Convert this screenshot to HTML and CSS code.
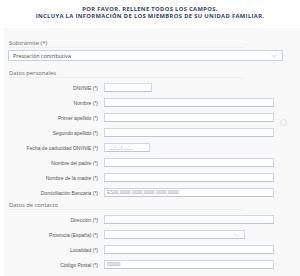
FILE: index.html
```html
<!DOCTYPE html>
<html lang="es">
<head>
    <meta charset="UTF-8">
    <meta name="viewport" content="width=device-width, initial-scale=1.0">
    <title>Solicitud</title>
    <link rel="stylesheet" href="styles.css">
</head>
<body>

    <div class="intro">
        <p>POR FAVOR, RELLENE TODOS LOS CAMPOS.</p>
        <p>INCLUYA LA INFORMACIÓN DE LOS MIEMBROS DE SU UNIDAD FAMILIAR.</p>
    </div>

    <div class="panel">
        <div class="section-title sub">Subtrámite (*)</div>
        <div class="select wide">
            <span>Prestación contributiva</span>
            <svg class="chev" width="6" height="4" viewBox="0 0 6 4"><path d="M0.5 0.8 3 3.2 5.5 0.8" fill="none" stroke="#c9ced6" stroke-width="0.7"/></svg>
        </div>

        <div class="section-title">Datos personales</div>
        <div class="rows">
            <div class="row"><label>DNI/NIE (*)</label><div class="input short"></div></div>
            <div class="row"><label>Nombre (*)</label><div class="input"></div></div>
            <div class="row"><label>Primer apellido (*)</label><div class="input"></div></div>
            <div class="row"><label>Segundo apellido (*)</label><div class="input"></div></div>
            <div class="row"><label>Fecha de caducidad DNI/NIE (*)</label><div class="input short date">__/__/____</div></div>
            <div class="row"><label>Nombre del padre (*)</label><div class="input"></div></div>
            <div class="row"><label>Nombre de la madre (*)</label><div class="input"></div></div>
            <div class="row"><label>Domiciliación Bancaria (*)</label><div class="input ph">ES00 0000 0000 0000 0000 0000</div></div>
        </div>

        <div class="section-title contact">Datos de contacto</div>
        <div class="rows">
            <div class="row"><label>Dirección (*)</label><div class="input"></div></div>
            <div class="row"><label>Provincia (España) (*)</label>
                <div class="input select-mid">
                    <svg class="chev" width="6" height="4" viewBox="0 0 6 4"><path d="M0.5 0.8 3 3.2 5.5 0.8" fill="none" stroke="#c9ced6" stroke-width="0.7"/></svg>
                </div>
            </div>
            <div class="row"><label>Localidad (*)</label><div class="input"></div></div>
            <div class="row"><label>Código Postal (*)</label><div class="input ph">00000</div></div>
        </div>

        <span class="dot"></span>
    </div>

</body>
</html>
```

FILE: styles.css
```css
body {
  margin: 0;
  background: #fff;
  font-family: "Liberation Sans", Arial, sans-serif;
  color: #555;
}

.intro {
  height: 22px;
  padding-top: 6px;
  text-align: center;
  font-family: "Open Sans", sans-serif;
  font-weight: 700;
  font-size: 5.8px;
  line-height: 6.5px;
  letter-spacing: 0.35px;
  color: #2d3b69;
}

.intro p {
  margin: 0;
}

.panel {
  position: relative;
  margin-left: 4px;
  padding: 12px 0 10px 5px;
  background: #f8f8f8;
}

.section-title {
  width: 234px;
  margin-top: 9px;
  font-family: "Open Sans", sans-serif;
  font-size: 5.8px;
  line-height: 7px;
  color: #666;
  border-bottom: 1px solid #ececec;
}

.section-title.sub {
  margin-top: 0;
  width: 236px;
}

.section-title.contact {
  margin-top: 5px;
}

.select {
  display: flex;
  align-items: center;
  justify-content: space-between;
  box-sizing: border-box;
  height: 11px;
  margin: 2px 0 0 -1px;
  padding: 0 5px 0 4px;
  background: #fff;
  border: 1px solid #c6d1e2;
  font-family: "Open Sans", sans-serif;
  font-size: 5.4px;
  color: #444;
}

.select.wide {
  width: 275px;
}

.rows {
  margin-top: 5px;
}

.row {
  display: flex;
  align-items: center;
  gap: 6px;
  height: 9px;
  margin-bottom: 6px;
}

.row:last-child {
  margin-bottom: 0;
}

.row label {
  width: 89px;
  flex: none;
  text-align: right;
  font-size: 5px;
  color: #555;
  white-space: nowrap;
}

.input {
  box-sizing: border-box;
  width: 170px;
  height: 9px;
  padding-left: 2px;
  background: #fff;
  border: 1px solid #cdd7e6;
  border-bottom-color: #b9c6da;
  font-size: 4.8px;
  line-height: 7px;
  color: #999;
}

.input.short {
  width: 48px;
}

.input.date {
  width: 46px;
  padding-left: 4px;
  color: #999;
}

.select-mid {
  display: flex;
  align-items: center;
  justify-content: flex-end;
  width: 141px;
  padding-right: 4px;
}

.dot {
  position: absolute;
  left: 276px;
  top: 91px;
  width: 5px;
  height: 5px;
  border: 1px solid #e2e2e2;
  border-radius: 50%;
}
```
